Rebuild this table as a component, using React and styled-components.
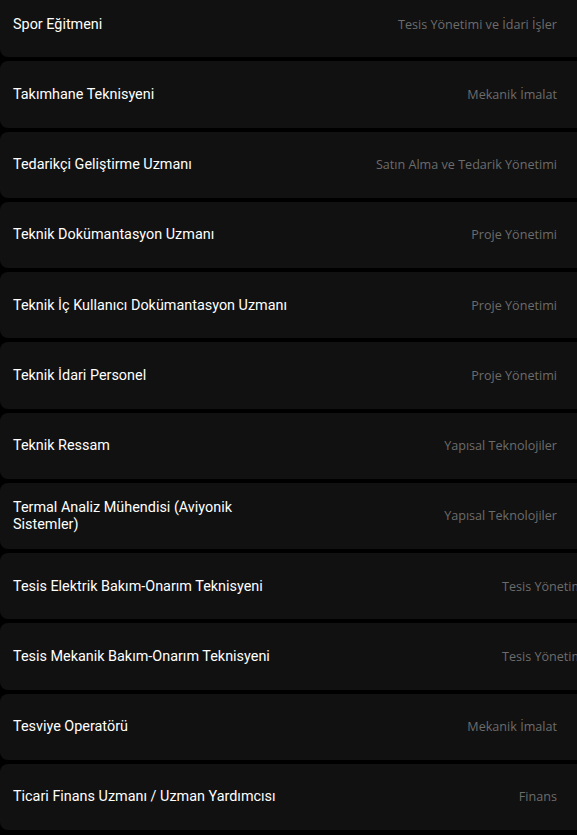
import React from 'react';
import styled, { createGlobalStyle } from 'styled-components';

const GlobalStyle = createGlobalStyle`
  html, body {
    margin: 0;
    padding: 0;
    background: #000;
    overflow: hidden;
  }
`;

const jobs = [
    { title: 'Spor Eğitmeni', dept: 'Tesis Yönetimi ve İdari İşler' },
    { title: 'Takımhane Teknisyeni', dept: 'Mekanik İmalat' },
    { title: 'Tedarikçi Geliştirme Uzmanı', dept: 'Satın Alma ve Tedarik Yönetimi' },
    { title: 'Teknik Dokümantasyon Uzmanı', dept: 'Proje Yönetimi' },
    { title: 'Teknik İç Kullanıcı Dokümantasyon Uzmanı', dept: 'Proje Yönetimi' },
    { title: 'Teknik İdari Personel', dept: 'Proje Yönetimi' },
    { title: 'Teknik Ressam', dept: 'Yapısal Teknolojiler' },
    { title: 'Termal Analiz Mühendisi (Aviyonik Sistemler)', dept: 'Yapısal Teknolojiler' },
    { title: 'Tesis Elektrik Bakım-Onarım Teknisyeni', dept: 'Tesis Yönetimi ve İdari İşler', wide: true },
    { title: 'Tesis Mekanik Bakım-Onarım Teknisyeni', dept: 'Tesis Yönetimi ve İdari İşler', wide: true },
    { title: 'Tesviye Operatörü', dept: 'Mekanik İmalat' },
    { title: 'Ticari Finans Uzmanı / Uzman Yardımcısı', dept: 'Finans' },
];

const App = () => {
    return (
        <>
            <GlobalStyle />
            <List>
                {jobs.map(({ title, dept, wide }) => (
                    <Row key={title}>
                        <Title>{title}</Title>
                        <Dept $wide={wide}>{dept}</Dept>
                    </Row>
                ))}
            </List>
        </>
    );
};

export default App;

const List = styled.div`
    display: flex;
    flex-direction: column;
    gap: 4px;
    margin-top: -9px;
`;

const Row = styled.div`
    display: flex;
    align-items: center;
    justify-content: space-between;
    height: 66.25px;
    box-sizing: border-box;
    padding: 0 20px 0 13px;
    background: #111111;
    border-radius: 8px 0 0 8px;
    overflow: hidden;
`;

const Title = styled.div`
    max-width: 285px;
    color: #ffffff;
    font-family: Roboto, "Liberation Sans", sans-serif;
    font-size: 14.4px;
    font-weight: 400;
    line-height: 17px;
`;

const Dept = styled.div`
    flex-shrink: 0;
    white-space: nowrap;
    color: #6c6c6c;
    font-family: "Open Sans", "Liberation Sans", sans-serif;
    font-size: 12.6px;
    margin-right: ${({ $wide }) => ($wide ? '-104px' : '0')};
`;
